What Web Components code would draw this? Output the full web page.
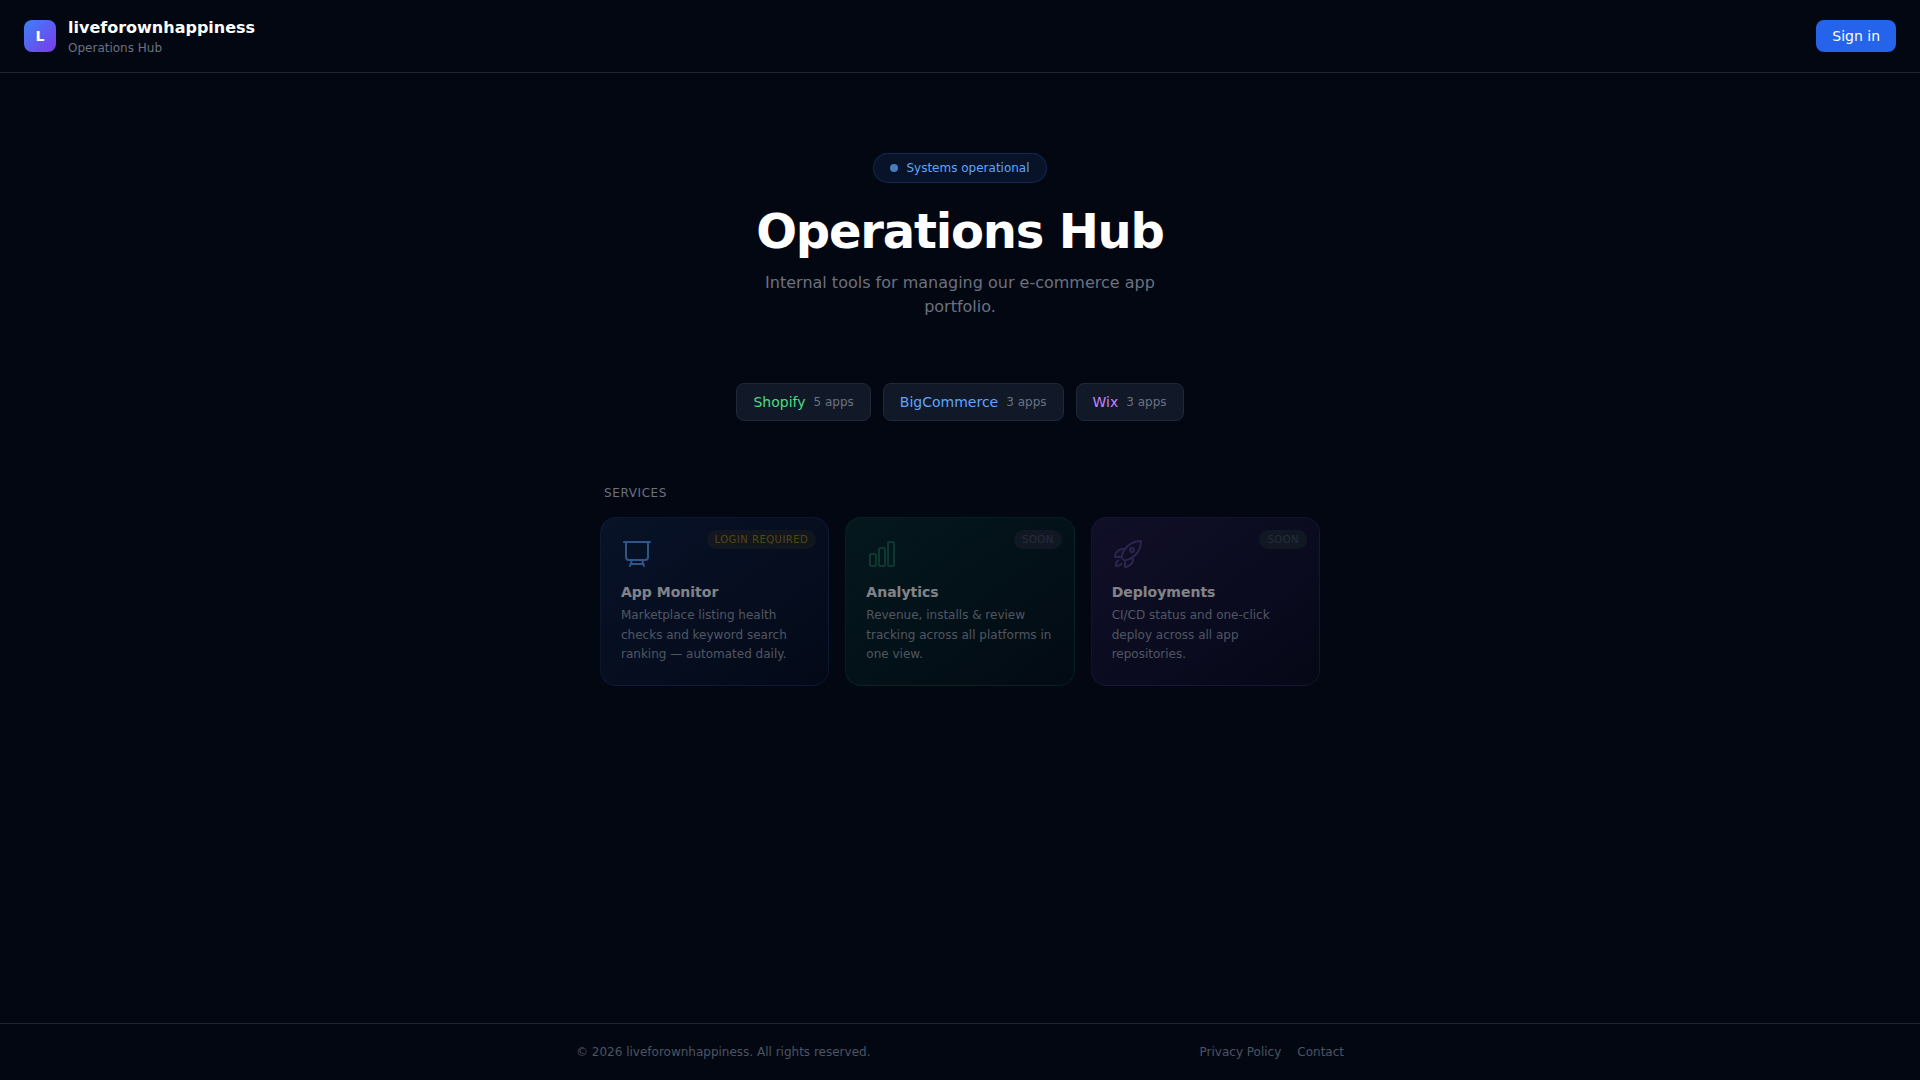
<!DOCTYPE html>
<html lang="en">
<head>
<meta charset="utf-8">
<meta name="viewport" content="width=device-width, initial-scale=1">
<title>liveforownhappiness | Operations Hub</title>
<style>
  body { margin: 0; background: #030712; color: #fff; font: 16px/24px "DejaVu Sans", sans-serif; }
</style>
</head>
<body>
<ops-page>
  <site-header slot="header" initial="L" name="liveforownhappiness" tagline="Operations Hub"></site-header>

  <hero-intro>
    <status-pill slot="status">Systems operational</status-pill>
    <span slot="title">Operations Hub</span>
    <span>Internal tools for managing our e-commerce app portfolio.</span>
  </hero-intro>

  <platform-list>
    <platform-chip count="5 apps" style="--tone:#4ade80">Shopify</platform-chip>
    <platform-chip count="3 apps" style="--tone:#60a5fa">BigCommerce</platform-chip>
    <platform-chip count="3 apps" style="--tone:#c084fc">Wix</platform-chip>
  </platform-list>

  <service-grid heading="Services">
    <service-card icon="monitor" badge="Login required" locked
      style="--from:#3b82f633;--to:#2563eb0d;--edge:#3b82f633;--icon:#60a5fa">
      <span slot="title">App Monitor</span>
      <span>Marketplace listing health checks and keyword search ranking — automated daily.</span>
    </service-card>
    <service-card icon="bars" badge="Soon"
      style="--from:#10b98133;--to:#0596690d;--edge:#10b98133;--icon:#34d399">
      <span slot="title">Analytics</span>
      <span>Revenue, installs &amp; review tracking across all platforms in one view.</span>
    </service-card>
    <service-card icon="rocket" badge="Soon"
      style="--from:#8b5cf633;--to:#7c3aed0d;--edge:#8b5cf633;--icon:#a78bfa">
      <span slot="title">Deployments</span>
      <span>CI/CD status and one-click deploy across all app repositories.</span>
    </service-card>
  </service-grid>

  <site-footer slot="footer">
    <span>© 2026 liveforownhappiness. All rights reserved.</span>
    <footer-link slot="links" to="#privacy">Privacy Policy</footer-link>
    <footer-link slot="links" to="#contact">Contact</footer-link>
  </site-footer>
</ops-page>

<script>
class BaseElement extends HTMLElement {
  connectedCallback() {
    if (this.shadowRoot) return;
    this.attachShadow({ mode: "open" }).innerHTML =
      `<style>*{box-sizing:border-box}:host{display:block;box-sizing:border-box}${this.css()}</style>${this.html()}`;
  }
  attr(name) { return this.getAttribute(name) || ""; }
}

customElements.define("ops-page", class extends BaseElement {
  css() { return `
    :host { display: flex; flex-direction: column; min-height: 100vh; }
    main { flex: 1; width: 100%; max-width: 768px; margin: 0 auto; padding: 80px 24px;
           display: flex; flex-direction: column; gap: 64px; }`; }
  html() { return `<slot name="header"></slot><main><slot></slot></main><slot name="footer"></slot>`; }
});

customElements.define("site-header", class extends BaseElement {
  css() { return `
    header { display: flex; align-items: center; justify-content: space-between; padding: 16px 24px; border-bottom: 1px solid #1f2430; }
    .brand { display: flex; align-items: center; gap: 12px; }
    .mark { width: 32px; height: 32px; border-radius: 8px; display: grid; place-items: center;
            background: linear-gradient(to bottom right, #3b82f6, #7c3aed); font: bold 14px/20px "DejaVu Sans", sans-serif; }
    .name { font-weight: bold; }
    .tag { font-size: 12px; line-height: 16px; color: #6b7280; }
    button { border: 0; border-radius: 8px; padding: 6px 16px; background: #2563eb; color: #fff; font: 14px/20px "DejaVu Sans", sans-serif; cursor: pointer; }
    button:hover { background: #3b82f6; }`; }
  html() { return `<header><div class="brand"><div class="mark">${this.attr("initial")}</div>
    <div><div class="name">${this.attr("name")}</div><div class="tag">${this.attr("tagline")}</div></div></div>
    <button type="button">Sign in</button></header>`; }
});

customElements.define("status-pill", class extends BaseElement {
  css() { return `
    :host { display: inline-flex; align-items: center; gap: 8px; padding: 6px 16px; border: 1px solid #3b82f633;
            border-radius: 15px; background: #3b82f61a; color: #60a5fa; font-size: 12px; line-height: 16px; }
    i { width: 8px; height: 8px; border-radius: 50%; background: #60a5fa; opacity: .72; }`; }
  html() { return `<i></i><slot></slot>`; }
});

customElements.define("hero-intro", class extends BaseElement {
  css() { return `
    :host { display: flex; flex-direction: column; align-items: center; text-align: center; }
    h1 { margin: 24px 0 16px; font-size: 48px; line-height: 48px; font-weight: bold; letter-spacing: -0.025em; }
    p { margin: 0; max-width: 448px; color: #6b7280; }`; }
  html() { return `<slot name="status"></slot><h1><slot name="title"></slot></h1><p><slot></slot></p>`; }
});

customElements.define("platform-list", class extends BaseElement {
  css() { return `:host { display: flex; flex-wrap: wrap; justify-content: center; gap: 12px; }`; }
  html() { return `<slot></slot>`; }
});

customElements.define("platform-chip", class extends BaseElement {
  css() { return `
    :host { display: flex; align-items: center; gap: 8px; padding: 8px 16px; border: 1px solid #1f2937; border-radius: 8px; background: #111827; }
    b { font-weight: normal; font-size: 14px; line-height: 20px; color: var(--tone); }
    small { font-size: 12px; line-height: 16px; color: #6b7280; }`; }
  html() { return `<b><slot></slot></b><small>${this.attr("count")}</small>`; }
});

customElements.define("service-grid", class extends BaseElement {
  css() { return `
    h2 { margin: 0 0 16px; padding: 0 4px; font-size: 12px; line-height: 16px; font-weight: normal; letter-spacing: .05em; text-transform: uppercase; color: #6b7280; }
    div { display: grid; grid-template-columns: repeat(3, 1fr); gap: 16px; }
    @media (max-width: 640px) { div { grid-template-columns: 1fr; } }`; }
  html() { return `<h2>${this.attr("heading")}</h2><div><slot></slot></div>`; }
});

const ICONS = {
  monitor: "M3.75 3v11.25A2.25 2.25 0 006 16.5h2.25M3.75 3h-1.5M3.75 3h16.5m0 0h1.5m-1.5 0v11.25A2.25 2.25 0 0118 16.5h-2.25m-7.5 0h7.5m-7.5 0l-1 3m8.5-3l1 3m0 0l.5 1.5m-.5-1.5h-9.5m0 0l-.5 1.5",
  bars: "M3 13.125C3 12.504 3.504 12 4.125 12h2.25c.621 0 1.125.504 1.125 1.125v6.75C7.5 20.496 6.996 21 6.375 21h-2.25A1.125 1.125 0 013 19.875v-6.75zM9.75 8.625c0-.621.504-1.125 1.125-1.125h2.25c.621 0 1.125.504 1.125 1.125v11.25c0 .621-.504 1.125-1.125 1.125h-2.25a1.125 1.125 0 01-1.125-1.125V8.625zM16.5 4.125c0-.621.504-1.125 1.125-1.125h2.25C20.496 3 21 3.504 21 4.125v15.75c0 .621-.504 1.125-1.125 1.125h-2.25a1.125 1.125 0 01-1.125-1.125V4.125z",
  rocket: "M15.59 14.37a6 6 0 01-5.84 7.38v-4.8m5.84-2.58a14.98 14.98 0 006.16-12.12A14.98 14.98 0 009.631 8.41m5.96 5.96a14.926 14.926 0 01-5.841 2.58m-.119-8.54a6 6 0 00-7.381 5.84h4.8m2.581-5.84a14.927 14.927 0 00-2.58 5.84m2.699 2.7c-.103.021-.207.041-.311.06a15.09 15.09 0 01-2.448-2.448 14.9 14.9 0 01.06-.312m-2.24 2.39a4.493 4.493 0 00-1.757 4.306 4.493 4.493 0 004.306-1.758M16.5 9a1.5 1.5 0 11-3 0 1.5 1.5 0 013 0z"
};

customElements.define("service-card", class extends BaseElement {
  css() { return `
    :host { position: relative; padding: 20px; border: 1px solid var(--edge); border-radius: 16px;
            background: linear-gradient(to bottom right, var(--from), var(--to)); opacity: .5; }
    svg { display: block; width: 32px; height: 32px; margin-bottom: 12px; color: var(--icon); opacity: .4; }
    :host([locked]) svg { opacity: 1; }
    h3 { margin: 0 0 4px; font-size: 14px; line-height: 20px; font-weight: bold; }
    p { margin: 0; font-size: 12px; line-height: 1.625; color: #9ca3af; }
    .badge { position: absolute; top: 12px; right: 12px; padding: 2px 8px; border-radius: 10px; font-size: 10px; line-height: 15px;
             letter-spacing: .05em; text-transform: uppercase; background: #1f2937; color: #4b5563; }
    :host([locked]) .badge { background: #eab3081a; color: #a8850c; }`; }
  html() { return `<span class="badge">${this.attr("badge")}</span>
    <svg viewBox="0 0 24 24" fill="none" stroke="currentColor" stroke-width="1.5" stroke-linecap="round" stroke-linejoin="round" aria-hidden="true"><path d="${ICONS[this.attr("icon")]}"/></svg>
    <h3><slot name="title"></slot></h3><p><slot></slot></p>`; }
});

customElements.define("site-footer", class extends BaseElement {
  css() { return `
    footer { border-top: 1px solid #1f2430; padding: 20px 24px; font-size: 12px; line-height: 16px; color: #4b5563; }
    .row { max-width: 768px; margin: 0 auto; display: flex; justify-content: space-between; gap: 16px; }
    nav { display: flex; gap: 16px; }`; }
  html() { return `<footer><div class="row"><slot></slot><nav><slot name="links"></slot></nav></div></footer>`; }
});

customElements.define("footer-link", class extends BaseElement {
  css() { return `a { display: block; color: #4b5563; text-decoration: none; } a:hover { color: #9ca3af; }`; }
  html() { return `<a href="${this.attr("to")}"><slot></slot></a>`; }
});
</script>
</body>
</html>
